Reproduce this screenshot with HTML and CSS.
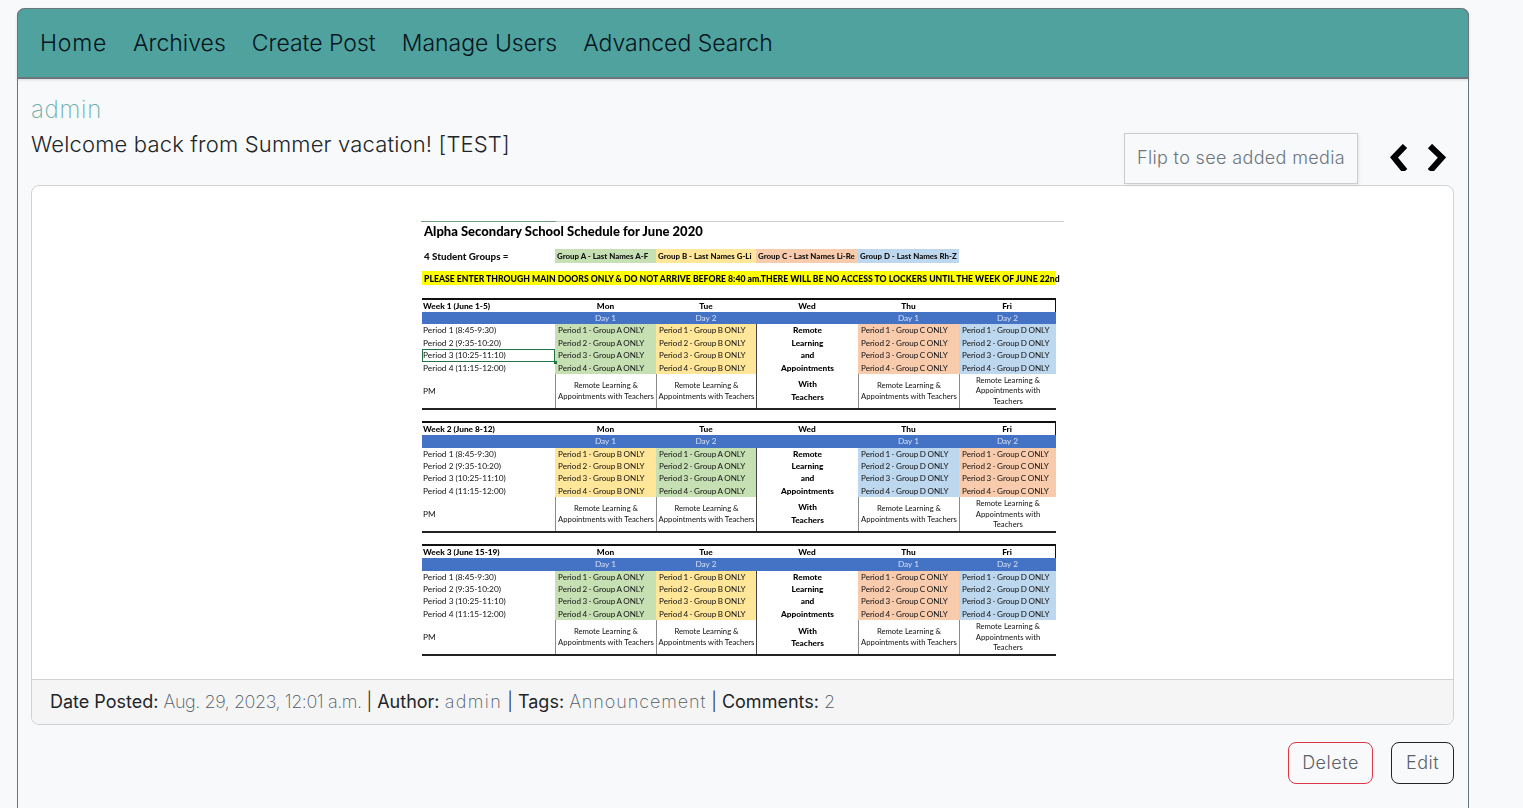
FILE: index.html
```html
<!DOCTYPE html>
<html lang="en">
<head>
  <meta charset="UTF-8">
  <meta name="viewport" content="width=device-width, initial-scale=1.0">
  <title>Welcome back from Summer vacation!</title>
  <link rel="stylesheet" href="styles.css">
</head>
<body>
  <div class="page">
    <nav class="topnav">
      <a href="#">Home</a>
      <a href="#">Archives</a>
      <a href="#">Create Post</a>
      <a href="#">Manage Users</a>
      <a href="#">Advanced Search</a>
    </nav>

    <main class="content">
      <div class="post-head">
        <div class="post-titles">
          <div class="post-user">admin</div>
          <h1 class="post-title">Welcome back from Summer vacation! [TEST]</h1>
        </div>
        <div class="flip-box">Flip to see added media</div>
        <div class="arrows">
          <svg class="arrow" viewBox="0 0 20 27"><path d="M16 2 L5 13.5 L16 27"/></svg>
          <svg class="arrow" viewBox="0 0 20 27"><path d="M4 2 L16 13.5 L4 27"/></svg>
        </div>
      </div>

      <section class="card">
        <div class="card-body">
          <div class="sched">
            <div class="sched-top"></div>
            <div class="sched-title">Alpha Secondary School Schedule for June 2020</div>
            <div class="sched-groups">
              <div class="lbl">4 Student Groups =</div>
              <div class="a">Group A - Last Names A-F</div>
              <div class="b">Group B - Last Names G-Li</div>
              <div class="c">Group C - Last Names Li-Re</div>
              <div class="d">Group D - Last Names Rh-Z</div>
            </div>
            <div class="sched-notice">PLEASE ENTER THROUGH MAIN DOORS ONLY &amp; DO NOT ARRIVE BEFORE 8:40 am.THERE WILL BE NO ACCESS TO LOCKERS UNTIL THE WEEK OF JUNE 22nd</div>

            <div class="week">
              <div class="hd lbl">Week 1 (June 1-5)</div><div class="hd">Mon</div><div class="hd">Tue</div><div class="hd">Wed</div><div class="hd">Thu</div><div class="hd">Fri</div>
              <div class="day"></div><div class="day">Day 1</div><div class="day">Day 2</div><div class="day"></div><div class="day">Day 1</div><div class="day">Day 2</div>
              <div class="lbl">Period 1 (8:45-9:30)</div><div class="a">Period 1 - Group A ONLY</div><div class="b">Period 1 - Group B ONLY</div><div class="wed">Remote</div><div class="c">Period 1 - Group C ONLY</div><div class="d">Period 1 - Group D ONLY</div>
              <div class="lbl">Period 2 (9:35-10:20)</div><div class="a">Period 2 - Group A ONLY</div><div class="b">Period 2 - Group B ONLY</div><div class="wed">Learning</div><div class="c">Period 2 - Group C ONLY</div><div class="d">Period 2 - Group D ONLY</div>
              <div class="lbl selected">Period 3 (10:25-11:10)<span class="handle"></span></div><div class="a">Period 3 - Group A ONLY</div><div class="b">Period 3 - Group B ONLY</div><div class="wed">and</div><div class="c">Period 3 - Group C ONLY</div><div class="d">Period 3 - Group D ONLY</div>
              <div class="lbl">Period 4 (11:15-12:00)</div><div class="a">Period 4 - Group A ONLY</div><div class="b">Period 4 - Group B ONLY</div><div class="wed">Appointments</div><div class="c">Period 4 - Group C ONLY</div><div class="d">Period 4 - Group D ONLY</div>
              <div class="lbl pm-lbl">PM</div><div class="pm">Remote Learning &amp;<br>Appointments with Teachers</div><div class="pm">Remote Learning &amp;<br>Appointments with Teachers</div><div class="pm wed-pm">With<br>Teachers</div><div class="pm">Remote Learning &amp;<br>Appointments with Teachers</div><div class="pm">Remote Learning &amp;<br>Appointments with<br>Teachers</div>
            </div>

            <div class="week">
              <div class="hd lbl">Week 2 (June 8-12)</div><div class="hd">Mon</div><div class="hd">Tue</div><div class="hd">Wed</div><div class="hd">Thu</div><div class="hd">Fri</div>
              <div class="day"></div><div class="day">Day 1</div><div class="day">Day 2</div><div class="day"></div><div class="day">Day 1</div><div class="day">Day 2</div>
              <div class="lbl">Period 1 (8:45-9:30)</div><div class="b">Period 1 - Group B ONLY</div><div class="a">Period 1 - Group A ONLY</div><div class="wed">Remote</div><div class="d">Period 1 - Group D ONLY</div><div class="c">Period 1 - Group C ONLY</div>
              <div class="lbl">Period 2 (9:35-10:20)</div><div class="b">Period 2 - Group B ONLY</div><div class="a">Period 2 - Group A ONLY</div><div class="wed">Learning</div><div class="d">Period 2 - Group D ONLY</div><div class="c">Period 2 - Group C ONLY</div>
              <div class="lbl">Period 3 (10:25-11:10)</div><div class="b">Period 3 - Group B ONLY</div><div class="a">Period 3 - Group A ONLY</div><div class="wed">and</div><div class="d">Period 3 - Group D ONLY</div><div class="c">Period 3 - Group C ONLY</div>
              <div class="lbl">Period 4 (11:15-12:00)</div><div class="b">Period 4 - Group B ONLY</div><div class="a">Period 4 - Group A ONLY</div><div class="wed">Appointments</div><div class="d">Period 4 - Group D ONLY</div><div class="c">Period 4 - Group C ONLY</div>
              <div class="lbl pm-lbl">PM</div><div class="pm">Remote Learning &amp;<br>Appointments with Teachers</div><div class="pm">Remote Learning &amp;<br>Appointments with Teachers</div><div class="pm wed-pm">With<br>Teachers</div><div class="pm">Remote Learning &amp;<br>Appointments with Teachers</div><div class="pm">Remote Learning &amp;<br>Appointments with<br>Teachers</div>
            </div>

            <div class="week">
              <div class="hd lbl">Week 3 (June 15-19)</div><div class="hd">Mon</div><div class="hd">Tue</div><div class="hd">Wed</div><div class="hd">Thu</div><div class="hd">Fri</div>
              <div class="day"></div><div class="day">Day 1</div><div class="day">Day 2</div><div class="day"></div><div class="day">Day 1</div><div class="day">Day 2</div>
              <div class="lbl">Period 1 (8:45-9:30)</div><div class="a">Period 1 - Group A ONLY</div><div class="b">Period 1 - Group B ONLY</div><div class="wed">Remote</div><div class="c">Period 1 - Group C ONLY</div><div class="d">Period 1 - Group D ONLY</div>
              <div class="lbl">Period 2 (9:35-10:20)</div><div class="a">Period 2 - Group A ONLY</div><div class="b">Period 2 - Group B ONLY</div><div class="wed">Learning</div><div class="c">Period 2 - Group C ONLY</div><div class="d">Period 2 - Group D ONLY</div>
              <div class="lbl">Period 3 (10:25-11:10)</div><div class="a">Period 3 - Group A ONLY</div><div class="b">Period 3 - Group B ONLY</div><div class="wed">and</div><div class="c">Period 3 - Group C ONLY</div><div class="d">Period 3 - Group D ONLY</div>
              <div class="lbl">Period 4 (11:15-12:00)</div><div class="a">Period 4 - Group A ONLY</div><div class="b">Period 4 - Group B ONLY</div><div class="wed">Appointments</div><div class="c">Period 4 - Group C ONLY</div><div class="d">Period 4 - Group D ONLY</div>
              <div class="lbl pm-lbl">PM</div><div class="pm">Remote Learning &amp;<br>Appointments with Teachers</div><div class="pm">Remote Learning &amp;<br>Appointments with Teachers</div><div class="pm wed-pm">With<br>Teachers</div><div class="pm">Remote Learning &amp;<br>Appointments with Teachers</div><div class="pm">Remote Learning &amp;<br>Appointments with<br>Teachers</div>
            </div>
          </div>
        </div>
        <div class="card-footer">
          <b>Date Posted:</b> <span class="val val-date">Aug. 29, 2023, 12:01 a.m.</span> | <b>Author:</b> <span class="val val-author">admin</span> | <b>Tags:</b> <span class="val val-tag">Announcement</span> | <b>Comments:</b> <span class="val">2</span>
        </div>
      </section>

      <div class="actions">
        <a class="btn btn-delete" href="#">Delete</a>
        <a class="btn btn-edit" href="#">Edit</a>
      </div>
    </main>
  </div>
</body>
</html>
```

FILE: styles.css
```css
html, body {
  margin: 0;
  background-color: #f8f9fa;
}
body {
  font-family: Inter, "Open Sans", sans-serif;
  color: #212529;
  padding-top: 8px;
}
a {
  text-decoration: none;
}

.page {
  width: 1452px;
  margin-left: 17px;
  box-sizing: border-box;
  border-left: 1px solid #6c757d;
  border-right: 1px solid #6c757d;
  border-radius: 8px 8px 0 0;
}

.topnav {
  display: flex;
  gap: 26px;
  align-items: center;
  height: 71px;
  box-sizing: border-box;
  margin: 0 -1px;
  padding: 0 22px;
  background-color: #4fa29e;
  border: 1px solid #6c757d;
  border-bottom-width: 2px;
  border-radius: 8px 8px 0 0;
  box-shadow: 0 1px 3px rgba(0,0,0,.12);
}
.topnav a {
  color: #05141c;
  font-size: 23px;
  font-weight: 300;
}
.topnav a:first-child {
  letter-spacing: 0.75px;
}

.content {
  padding: 0 14px 25px 13px;
}

.post-head {
  display: flex;
  align-items: flex-end;
  height: 106px;
}
.post-titles {
  flex: 1;
  align-self: flex-start;
  padding-top: 16px;
}
.post-user {
  color: #6fb0ad;
  font-size: 24px;
  font-weight: 200;
  letter-spacing: 0.7px;
  line-height: 30px;
}
.post-title {
  margin: 4px 0 0;
  font-size: 22px;
  font-weight: 300;
  letter-spacing: 0.17px;
  line-height: 30px;
}
.flip-box {
  box-sizing: border-box;
  width: 234px;
  height: 51px;
  margin-bottom: 1px;
  line-height: 47px;
  text-align: center;
  color: #6c757d;
  font-size: 18px;
  font-weight: 300;
  letter-spacing: 0.35px;
  border: 1px solid #ccc;
  box-shadow: 1px 1px 3px rgba(0,0,0,.08);
}
.arrows {
  display: flex;
  gap: 17px;
  width: 96px;
  padding: 0 0 14px 31px;
  box-sizing: border-box;
}
.arrow {
  width: 20px;
  height: 27px;
  fill: none;
  stroke: #000;
  stroke-width: 6;
}

.card {
  background-color: #fff;
  border: 1px solid #d0d2d4;
  border-radius: 8px;
}
.card-body {
  padding: 35px 0 22px 389px;
}
.card-footer {
  height: 45px;
  box-sizing: border-box;
  padding: 0 18px;
  line-height: 43px;
  font-size: 18px;
  font-weight: 300;
  background-color: #f5f5f5;
  border-top: 1px solid #d0d2d4;
  border-radius: 0 0 8px 8px;
}
.card-footer b {
  font-weight: 400;
}
.val {
  color: #4f5a66;
  font-weight: 200;
}
.val-date {
  letter-spacing: -0.43px;
}
.val-author {
  letter-spacing: 1.4px;
}
.val-tag {
  letter-spacing: 0.9px;
}

.actions {
  display: flex;
  justify-content: flex-end;
  gap: 18px;
  margin-top: 17px;
}
.btn {
  box-sizing: border-box;
  height: 42px;
  line-height: 40px;
  text-align: center;
  color: #5b6168;
  font-size: 18px;
  font-weight: 300;
  letter-spacing: 0.5px;
  border: 1px solid;
  border-radius: 8px;
}
.btn-delete {
  width: 85px;
  border-color: #dc3545;
}
.btn-edit {
  width: 63px;
  border-color: #212529;
}

/* schedule sheet */
.sched {
  width: 643px;
  height: 436px;
  font-family: Lato, "Open Sans", sans-serif;
  font-size: 8.3px;
  color: #111;
  filter: blur(0.2px);
  overflow: hidden;
}
.sched-top {
  height: 1px;
  background: linear-gradient(to right, #6f9f7f 135px, #ccc 135px);
}
.sched-title {
  margin: 0 0 0 3px;
  height: 27px;
  line-height: 18px;
  font-size: 13px;
  font-weight: 900;
  color: #000;
}
.sched-groups, .week {
  display: grid;
  grid-template-columns: 133px 101px 100px 102px 101px 97px;
  width: 634px;
  margin-left: 1px;
}
.sched-groups {
  height: 14px;
  line-height: 14px;
  font-weight: 900;
  font-size: 7.9px;
}
.sched-groups .lbl {
  font-size: 9.8px;
}
.sched-groups > div {
  padding-left: 2px;
  white-space: nowrap;
  overflow: hidden;
}
.sched-notice {
  width: 634px;
  height: 14px;
  margin: 8px 0 13px 1px;
  padding-left: 2px;
  box-sizing: border-box;
  line-height: 15px;
  font-size: 8.67px;
  font-weight: 900;
  color: #000;
  white-space: nowrap;
  background-color: #ffff00;
}
.week {
  grid-template-rows: 12px 12.4px repeat(4, 12.4px) 33.6px;
  line-height: 12.4px;
  margin-bottom: 11.6px;
  border-top: 2px solid #111;
  border-bottom: 2px solid #222;
}
.week > div {
  white-space: nowrap;
  padding-left: 3px;
}
.week > .a, .week > .b, .week > .c, .week > .d {
  font-size: 8.1px;
  word-spacing: -0.6px;
}
.hd {
  font-weight: 900;
  text-align: center;
  line-height: 13px;
  color: #000;
}
.week > .hd, .week > .day {
  padding-left: 0;
}
.hd:nth-child(6) {
  border-right: 1px solid #111;
}
.week > .hd.lbl {
  text-align: left;
  padding-left: 1px;
}
.week > .lbl {
  padding-left: 1px;
}
.day {
  background-color: #4472c4;
  color: #d5e0f2;
  text-align: center;
}
.a { background-color: #c6e0b4; }
.b { background-color: #ffe699; }
.c { background-color: #f8cbad; }
.d { background-color: #bdd7ee; }
.week > .wed {
  padding-left: 0;
  text-align: center;
  font-weight: 900;
  border-left: 1px solid #444;
  color: #000;
}
.pm-lbl {
  line-height: 34px;
}
.week > .pm {
  display: flex;
  align-items: center;
  justify-content: center;
  text-align: center;
  padding: 0;
  font-size: 7.7px;
  line-height: 10.6px;
  border-left: 1px solid #8a8a8a;
}
.week > .wed-pm {
  font-size: 8.3px;
  font-weight: 900;
  line-height: 12.4px;
  border-left-color: #444;
  color: #000;
}
.selected {
  position: relative;
  box-sizing: border-box;
  outline: 1px solid #217346;
  outline-offset: -1px;
  line-height: 12px;
}
.handle {
  position: absolute;
  right: -2px;
  bottom: -2px;
  width: 3px;
  height: 3px;
  background-color: #217346;
}
```
